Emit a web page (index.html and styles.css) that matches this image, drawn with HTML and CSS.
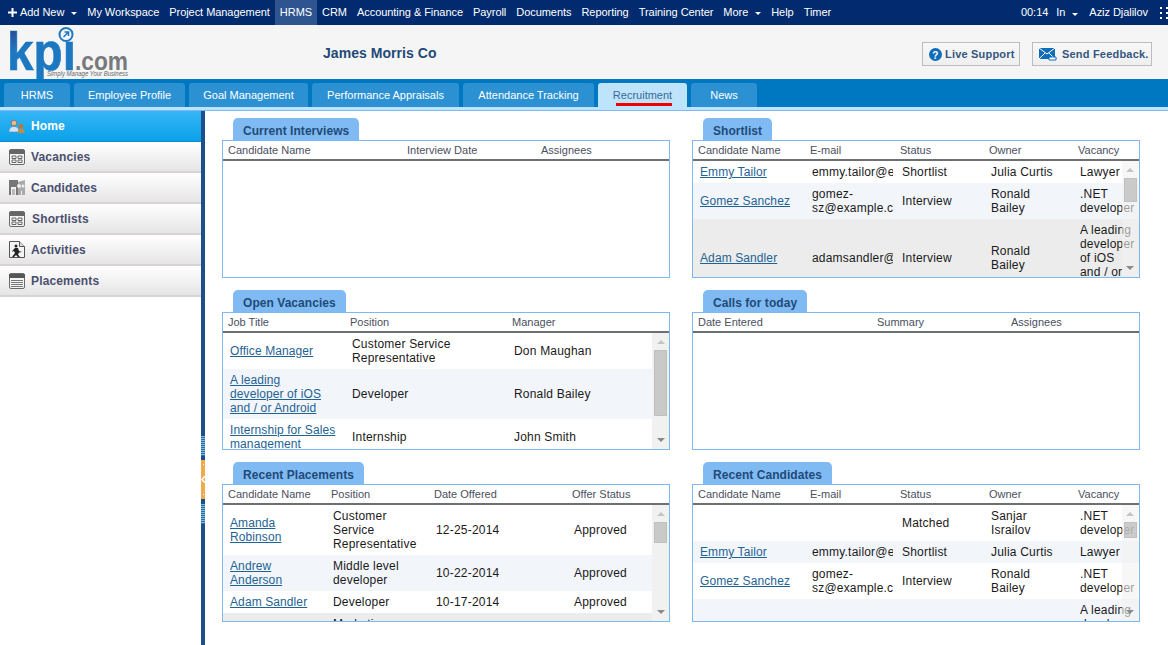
FILE: index.html
```html
<!DOCTYPE html>
<html lang="en">
<head>
<meta charset="utf-8">
<title>KPI.com HRMS - Recruitment</title>
<link rel="stylesheet" href="styles.css">
</head>
<body>
<nav class="topbar">
  <a class="top-item add"><svg class="plus" width="9" height="9" viewBox="0 0 9 9"><path d="M3.5 0h2v3.5H9v2H5.5V9h-2V5.5H0v-2h3.5z" fill="#fff"/></svg>Add New<i class="caret"></i></a>
  <a class="top-item">My Workspace</a>
  <a class="top-item">Project Management</a>
  <a class="top-item current">HRMS</a>
  <a class="top-item">CRM</a>
  <a class="top-item">Accounting &amp; Finance</a>
  <a class="top-item">Payroll</a>
  <a class="top-item">Documents</a>
  <a class="top-item">Reporting</a>
  <a class="top-item">Training Center</a>
  <a class="top-item">More<i class="caret"></i></a>
  <a class="top-item">Help</a>
  <a class="top-item">Timer</a>
  <div class="top-right">
    <span class="clock">00:14</span>
    <span class="inout">In<i class="caret"></i></span>
    <span class="user">Aziz Djalilov</span>
    <svg class="grip" width="8" height="14" viewBox="0 0 8 14"><path d="M0 0h2v2H0zM0 5h2v2H0zM0 10h2v2H0zM6 0h2v2H6zM6 5h2v2H6zM6 10h2v2H6z" fill="#fff"/></svg>
  </div>
</nav>

<header class="masthead">
  <svg class="logo" width="126" height="54" viewBox="0 0 126 54">
    <defs><linearGradient id="kfill" x1="0" y1="0" x2=".22" y2=".45"><stop offset="0" stop-color="#23306f"/><stop offset=".55" stop-color="#2a5aa6"/><stop offset="1" stop-color="#1d78c2"/></linearGradient></defs>
    <text x="0" y="45" class="logo-kpi" textLength="69" lengthAdjust="spacingAndGlyphs" fill="url(#kfill)">kpi</text>
    <text x="68" y="45" class="logo-com" textLength="53" lengthAdjust="spacingAndGlyphs">.com</text>
    <text x="40" y="51" class="logo-tag" textLength="81" lengthAdjust="spacingAndGlyphs">Simply Manage Your Business</text>
    <circle cx="59" cy="9.500" r="6.500" fill="#f5f5f5" stroke="#1d78c2" stroke-width="2"/>
    <path d="M56.500 12l5-5M57.500 7h4v4" fill="none" stroke="#1d78c2" stroke-width="1.500"/>
  </svg>
  <h1 class="company">James Morris Co</h1>
  <div class="head-actions">
    <a class="head-btn support"><svg width="13" height="13" viewBox="0 0 13 13"><circle cx="6.500" cy="6.500" r="6.500" fill="#0f6cb8"/><text x="6.500" y="10.500" text-anchor="middle" class="q">?</text></svg>Live Support</a>
    <a class="head-btn feedback"><svg width="18" height="13" viewBox="0 0 18 13"><path d="M0 0h16v11H0z" fill="#0f6cb8"/><path d="M0 0l8 6 8-6M0 11l6-6M16 11l-6-6" fill="none" stroke="#fff"/><path d="M10 9h7v3h-7z" fill="#fff" stroke="#0f6cb8"/></svg>Send Feedback.</a>
  </div>
</header>

<div class="tabbar">
  <a class="tab t1">HRMS</a>
  <a class="tab t2">Employee Profile</a>
  <a class="tab t3">Goal Management</a>
  <a class="tab t4">Performance Appraisals</a>
  <a class="tab t5">Attendance Tracking</a>
  <a class="tab t6 active">Recruitment</a>
  <a class="tab t7">News</a>
</div>
<div class="strip"></div>

<div class="workspace">
  <aside class="sidebar">
    <a class="side-item home">
      <svg class="side-icon" width="16" height="14" viewBox="0 0 16 14"><circle cx="5" cy="4" r="2.800" fill="#e9b98f" stroke="#7a5a3a" stroke-width=".6"/><path d="M0 13c0-4 2-5.500 5-5.500S10 9 10 13z" fill="#cfe3f6" stroke="#5e7fa6" stroke-width=".6"/><circle cx="12" cy="7" r="2.300" fill="#b5763d"/><path d="M8.500 14c0-3 1.500-4.500 3.500-4.500S15.500 11 15.500 14z" fill="#c98a3f"/></svg>
      <span>Home</span>
    </a>
    <a class="side-item">
      <svg class="side-icon" width="16" height="16" viewBox="0 0 16 16"><rect x=".5" y=".5" width="15" height="15" rx="1.500" fill="#f4f4f4" stroke="#6a6a6a"/><path d="M0 1h16v4H0z" fill="#666"/><path d="M3 7h4v2.500H3zM9 7h4v2.500H9zM3 11h4v2.500H3zM9 11h4v2.500H9z" fill="none" stroke="#666"/></svg>
      <span>Vacancies</span>
    </a>
    <a class="side-item">
      <svg class="side-icon" width="16" height="16" viewBox="0 0 16 16"><path d="M0 0h9v15H7V7H2v8H0z" fill="#777"/><path d="M9 2l7-2v15h-3v-4h-1v4H9z" fill="#aaa"/><circle cx="10" cy="6" r="2" fill="#eee"/><circle cx="14" cy="6" r="1.500" fill="#eee"/><path d="M3 9h3v6H3z" fill="#bbb"/></svg>
      <span>Candidates</span>
    </a>
    <a class="side-item shift">
      <svg class="side-icon" width="16" height="16" viewBox="0 0 16 16"><rect x=".5" y=".5" width="15" height="15" rx="1.500" fill="#f4f4f4" stroke="#6a6a6a"/><path d="M0 1h16v4H0z" fill="#666"/><path d="M3 7h4v2.500H3zM9 7h4v2.500H9zM3 11h4v2.500H3zM9 11h4v2.500H9z" fill="none" stroke="#666"/></svg>
      <span>Shortlists</span>
    </a>
    <a class="side-item">
      <svg class="side-icon" width="16" height="17" viewBox="0 0 16 17"><path d="M.5.500h10l5 5v11H.5z" fill="#f4f4f4" stroke="#555"/><path d="M10.500.5v5h5" fill="#ddd" stroke="#555"/><circle cx="7" cy="5" r="1.500" fill="#222"/><path d="M6 7h3l1 3 3 1-3 .5-1 2 2 2.500H9l-2-2-2 2H3l3-4-1-2-2 1 1-2z" fill="#222"/></svg>
      <span>Activities</span>
    </a>
    <a class="side-item">
      <svg class="side-icon" width="16" height="16" viewBox="0 0 16 16"><rect x=".5" y=".5" width="15" height="15" rx="1.500" fill="#f4f4f4" stroke="#6a6a6a"/><path d="M0 1h16v4H0z" fill="#555"/><path d="M2 7.500h12M2 9.500h12M2 11.500h12M2 13.500h12" stroke="#777"/></svg>
      <span>Placements</span>
    </a>
  </aside>
  <div class="splitter">
    <div class="split-grip first"></div>
    <div class="split-handle"><b class="dot"></b><svg width="4" height="7" viewBox="0 0 4 7"><path d="M4 0L1 3.500 4 7" fill="none" stroke="#fff" stroke-width="1.500"/></svg><b class="dot"></b></div>
    <div class="split-grip"></div>
  </div>
  <main class="dashboard">

    <section class="panel">
      <h2 class="panel-tab">Current Interviews</h2>
      <div class="panel-box">
        <table class="grid">
          <colgroup><col class="w179"><col class="w134"><col></colgroup>
          <thead><tr><th>Candidate Name</th><th>Interview Date</th><th>Assignees</th></tr></thead>
        </table>
      </div>
    </section>

    <section class="panel">
      <h2 class="panel-tab">Shortlist</h2>
      <div class="panel-box">
        <table class="grid">
          <colgroup><col class="w112"><col class="w90"><col class="w89"><col class="w89"><col></colgroup>
          <thead><tr><th>Candidate Name</th><th>E-mail</th><th>Status</th><th>Owner</th><th>Vacancy</th></tr></thead>
          <tbody>
            <tr><td><a>Emmy Tailor</a></td><td>emmy.tailor@example.com</td><td>Shortlist</td><td>Julia Curtis</td><td>Lawyer</td></tr>
            <tr class="alt"><td><a>Gomez Sanchez</a></td><td>gomez-sz@example.com</td><td>Interview</td><td>Ronald Bailey</td><td>.NET developer</td></tr>
            <tr class="hover"><td><a>Adam Sandler</a></td><td>adamsandler@example.com</td><td>Interview</td><td>Ronald Bailey</td><td>A leading developer of iOS and / or Android</td></tr>
          </tbody>
        </table>
        <div class="scroll wide"><i class="arrow up"></i><b class="thumb th-short"></b><i class="arrow down"></i></div>
      </div>
    </section>

    <section class="panel">
      <h2 class="panel-tab">Open Vacancies</h2>
      <div class="panel-box">
        <table class="grid">
          <colgroup><col class="w122"><col class="w162"><col></colgroup>
          <thead><tr><th>Job Title</th><th>Position</th><th>Manager</th></tr></thead>
          <tbody>
            <tr><td><a>Office Manager</a></td><td>Customer Service Representative</td><td>Don Maughan</td></tr>
            <tr class="alt"><td><a>A leading developer of iOS and / or Android</a></td><td>Developer</td><td>Ronald Bailey</td></tr>
            <tr><td><a>Internship for Sales management</a></td><td>Internship</td><td>John Smith</td></tr>
          </tbody>
        </table>
        <div class="scroll solid"><i class="arrow up"></i><b class="thumb th-open"></b><i class="arrow down"></i></div>
      </div>
    </section>

    <section class="panel">
      <h2 class="panel-tab">Calls for today</h2>
      <div class="panel-box">
        <table class="grid">
          <colgroup><col class="w179"><col class="w134"><col></colgroup>
          <thead><tr><th>Date Entered</th><th>Summary</th><th>Assignees</th></tr></thead>
        </table>
      </div>
    </section>

    <section class="panel">
      <h2 class="panel-tab">Recent Placements</h2>
      <div class="panel-box">
        <table class="grid">
          <colgroup><col class="w103"><col class="w103"><col class="w138"><col></colgroup>
          <thead><tr><th>Candidate Name</th><th>Position</th><th>Date Offered</th><th>Offer Status</th></tr></thead>
          <tbody>
            <tr><td><a>Amanda Robinson</a></td><td>Customer Service Representative</td><td>12-25-2014</td><td>Approved</td></tr>
            <tr class="alt"><td><a>Andrew Anderson</a></td><td>Middle level developer</td><td>10-22-2014</td><td>Approved</td></tr>
            <tr><td><a>Adam Sandler</a></td><td>Developer</td><td>10-17-2014</td><td>Approved</td></tr>
            <tr class="hover"><td></td><td>Marketing manager</td><td></td><td></td></tr>
          </tbody>
        </table>
        <div class="scroll solid"><i class="arrow up"></i><b class="thumb th-place"></b><i class="arrow down"></i></div>
      </div>
    </section>

    <section class="panel">
      <h2 class="panel-tab">Recent Candidates</h2>
      <div class="panel-box">
        <table class="grid">
          <colgroup><col class="w112"><col class="w90"><col class="w89"><col class="w89"><col></colgroup>
          <thead><tr><th>Candidate Name</th><th>E-mail</th><th>Status</th><th>Owner</th><th>Vacancy</th></tr></thead>
          <tbody>
            <tr><td></td><td></td><td>Matched</td><td>Sanjar Israilov</td><td>.NET developer</td></tr>
            <tr class="alt"><td><a>Emmy Tailor</a></td><td>emmy.tailor@example.com</td><td>Shortlist</td><td>Julia Curtis</td><td>Lawyer</td></tr>
            <tr><td><a>Gomez Sanchez</a></td><td>gomez-sz@example.com</td><td>Interview</td><td>Ronald Bailey</td><td>.NET developer</td></tr>
            <tr class="alt"><td></td><td></td><td></td><td></td><td>A leading developer of iOS and / or Android</td></tr>
          </tbody>
        </table>
        <div class="scroll wide"><i class="arrow up"></i><b class="thumb th-cand"></b><i class="arrow down"></i></div>
      </div>
    </section>

  </main>
</div>
</body>
</html>
```

FILE: styles.css
```css
* { box-sizing: border-box; }
html, body { margin: 0; height: 100%; }
body {
  width: 1168px;
  height: 645px;
  overflow: hidden;
  background: #fff;
  font-family: "Liberation Sans", Arial, sans-serif;
  font-size: 12px;
  color: #1a1a1a;
}

/* top menu */
.topbar {
  display: flex;
  align-items: stretch;
  height: 25px;
  padding-left: 3px;
  background: #012b6e;
  color: #fff;
  font-size: 11px;
  line-height: 25px;
  letter-spacing: -.05px;
}
.top-item { display: flex; align-items: center; padding: 0 5px; white-space: nowrap; }
.top-item.current { background: #2e558f; }
.plus { margin-right: 3px; }
.caret {
  display: inline-block;
  width: 0;
  height: 0;
  margin: 2px 0 0 7px;
  border: 3px solid transparent;
  border-top: 3px solid #fff;
  border-bottom: 0;
}
.top-right { display: flex; align-items: center; margin-left: auto; }
.clock { margin-right: 8px; }
.inout { margin-right: 11px; }
.user { margin-right: 12px; }
.grip { margin-top: 2px; }

/* masthead */
.masthead {
  display: flex;
  align-items: center;
  height: 54px;
  padding: 0 16px 0 7px;
  background: #f5f5f5;
}
.logo { flex: none; }
.logo-kpi {
  font: bold 54px "Liberation Sans", sans-serif;
  stroke: #1d78c2;
  stroke-width: .6px;
}
.logo-com { font: bold 25px "Liberation Sans", sans-serif; fill: #77797c; }
.logo-tag { font: italic 7px "Liberation Sans", sans-serif; fill: #666; }
.company {
  margin: 2px 0 0 190px;
  font-size: 14px;
  font-weight: bold;
  color: #1f4a78;
  letter-spacing: .05px;
}
.head-actions { display: flex; gap: 12px; margin: 4px 0 0 auto; }
.head-btn {
  display: flex;
  align-items: center;
  height: 24px;
  padding: 0 0 0 6px;
  border: 1px solid #bcbcbc;
  background: linear-gradient(#f8f8f8, #efefef);
  color: #34567f;
  font-size: 11px;
  font-weight: bold;
  letter-spacing: .2px;
  white-space: nowrap;
}
.support { width: 98px; gap: 3px; }
.feedback { width: 120px; gap: 5px; }
.q { font: bold 10px "Liberation Sans", sans-serif; fill: #fff; }

/* section tabs */
.tabbar {
  display: flex;
  gap: 4px;
  height: 28px;
  padding: 4px 0 0 4px;
  background: #0078c1;
}
.tab {
  display: flex;
  align-items: center;
  justify-content: center;
  height: 24px;
  border-radius: 3px 3px 0 0;
  background: #2c91d3;
  color: #fff;
  font-size: 11px;
}
.t1, .t7 { width: 66px; }
.t2 { width: 111px; }
.t3 { width: 119px; }
.t4 { width: 147px; }
.t5 { width: 131px; }
.t6 { width: 89px; }
.tab.active {
  position: relative;
  background: #bde4fa;
  color: #3a6a9a;
}
.tab.active::after {
  content: "";
  position: absolute;
  left: 18px;
  right: 15px;
  bottom: 1px;
  height: 3px;
  background: #f00000;
}
.strip { height: 4px; background: #bde4fa; border-bottom: 1px solid #7db8f0; }

/* body */
.workspace { display: flex; height: 534px; }
.sidebar { width: 201px; flex: none; }
.side-item {
  display: flex;
  align-items: center;
  height: 31px;
  padding-left: 9px;
  border-bottom: 2px solid #d7d2d3;
  background: linear-gradient(#fff, #e5e5e5);
  color: #4a4f6e;
  font-size: 12px;
  font-weight: bold;
  letter-spacing: .15px;
}
.side-icon { flex: none; margin-right: 6px; }
.side-item.shift span { margin-left: 1px; }
.side-item.home {
  padding-bottom: 2px;
  border-bottom: 0;
  background: linear-gradient(#37b6f6, #08a0e8);
  color: #fff;
  box-shadow: inset 0 -1px 0 #0a8bd0;
}
.side-item.home + .side-item { border-top: 1px solid #fff; }

.splitter { width: 4px; flex: none; background: #1c4f8c; }
.split-grip {
  height: 20px;
  background: repeating-linear-gradient(#7db3d8 0 1px, #2a6fa6 1px 2px);
}
.split-grip.first { margin-top: 325px; }
.split-handle {
  display: flex;
  flex-direction: column;
  align-items: center;
  justify-content: space-between;
  height: 39px;
  margin: 4px 0 5px;
  padding: 4px 0;
  background: #f0aa4a;
}
.split-handle svg { display: block; }
.dot { display: block; width: 1px; height: 1px; background: #fff; }

/* dashboard */
.dashboard {
  display: grid;
  grid-template-columns: 448px 448px;
  grid-auto-rows: 160px;
  gap: 12px 22px;
  padding: 7px 0 0 17px;
}
.panel { display: flex; flex-direction: column; min-width: 0; }
.panel-tab {
  align-self: flex-start;
  height: 22px;
  margin: 0 0 0 11px;
  padding: 0 10px;
  border-radius: 5px 5px 0 0;
  background: #7fbaf3;
  color: #1f4a78;
  font-size: 12px;
  font-weight: bold;
  line-height: 26px;
  letter-spacing: .05px;
}
.panel-box {
  position: relative;
  height: 138px;
  overflow: hidden;
  border: 1px solid #7fb8f0;
  background: #fff;
}
.grid {
  width: 446px;
  border-collapse: separate;
  border-spacing: 0;
  table-layout: fixed;
}
.w179 { width: 179px; }
.w134 { width: 134px; }
.w112 { width: 112px; }
.w90 { width: 90px; }
.w89 { width: 89px; }
.w122 { width: 122px; }
.w162 { width: 162px; }
.w103 { width: 103px; }
.w138 { width: 138px; }
.grid th {
  height: 20px;
  padding: 0 0 0 5px;
  border-bottom: 2px solid #6d7072;
  color: #4b4f60;
  font-size: 11px;
  font-weight: normal;
  text-align: left;
}
.grid td {
  padding: 4px 6px 4px 7px;
  border-right: 2px solid transparent;
  overflow: hidden;
  line-height: 14px;
  letter-spacing: .2px;
  vertical-align: middle;
}
.grid td:last-child { padding-right: 0; }
.grid td a { color: #1f6394; text-decoration: underline; letter-spacing: .1px; }
.alt td { background: #f2f5fa; }
.hover td { background: #ececec; }

/* custom scrollbars lie over the table */
.scroll {
  position: absolute;
  top: 20px;
  right: 1px;
  bottom: 0;
  display: flex;
  flex-direction: column;
  align-items: center;
  width: 16px;
}
.scroll.solid { width: 17px; right: 0; background: #f1f1f1; }
.scroll.wide { background: rgba(241, 241, 241, .6); }
.thumb {
  display: block;
  width: 13px;
  flex: none;
  background: rgba(180, 180, 180, .65);
  border: 1px solid #c0c0c0;
}
.th-short { height: 24px; }
.th-open { height: 66px; }
.th-place { height: 21px; }
.th-cand { height: 16px; }
.arrow {
  display: block;
  flex: none;
  width: 0;
  height: 0;
  border: 4px solid transparent;
}
.arrow.up { margin: 7px 0 6px; border-top: 0; border-bottom: 4px solid #c4c4c4; }
.arrow.down { margin: auto 0 7px; border-bottom: 0; border-top: 4px solid #8a8a8a; }
```
